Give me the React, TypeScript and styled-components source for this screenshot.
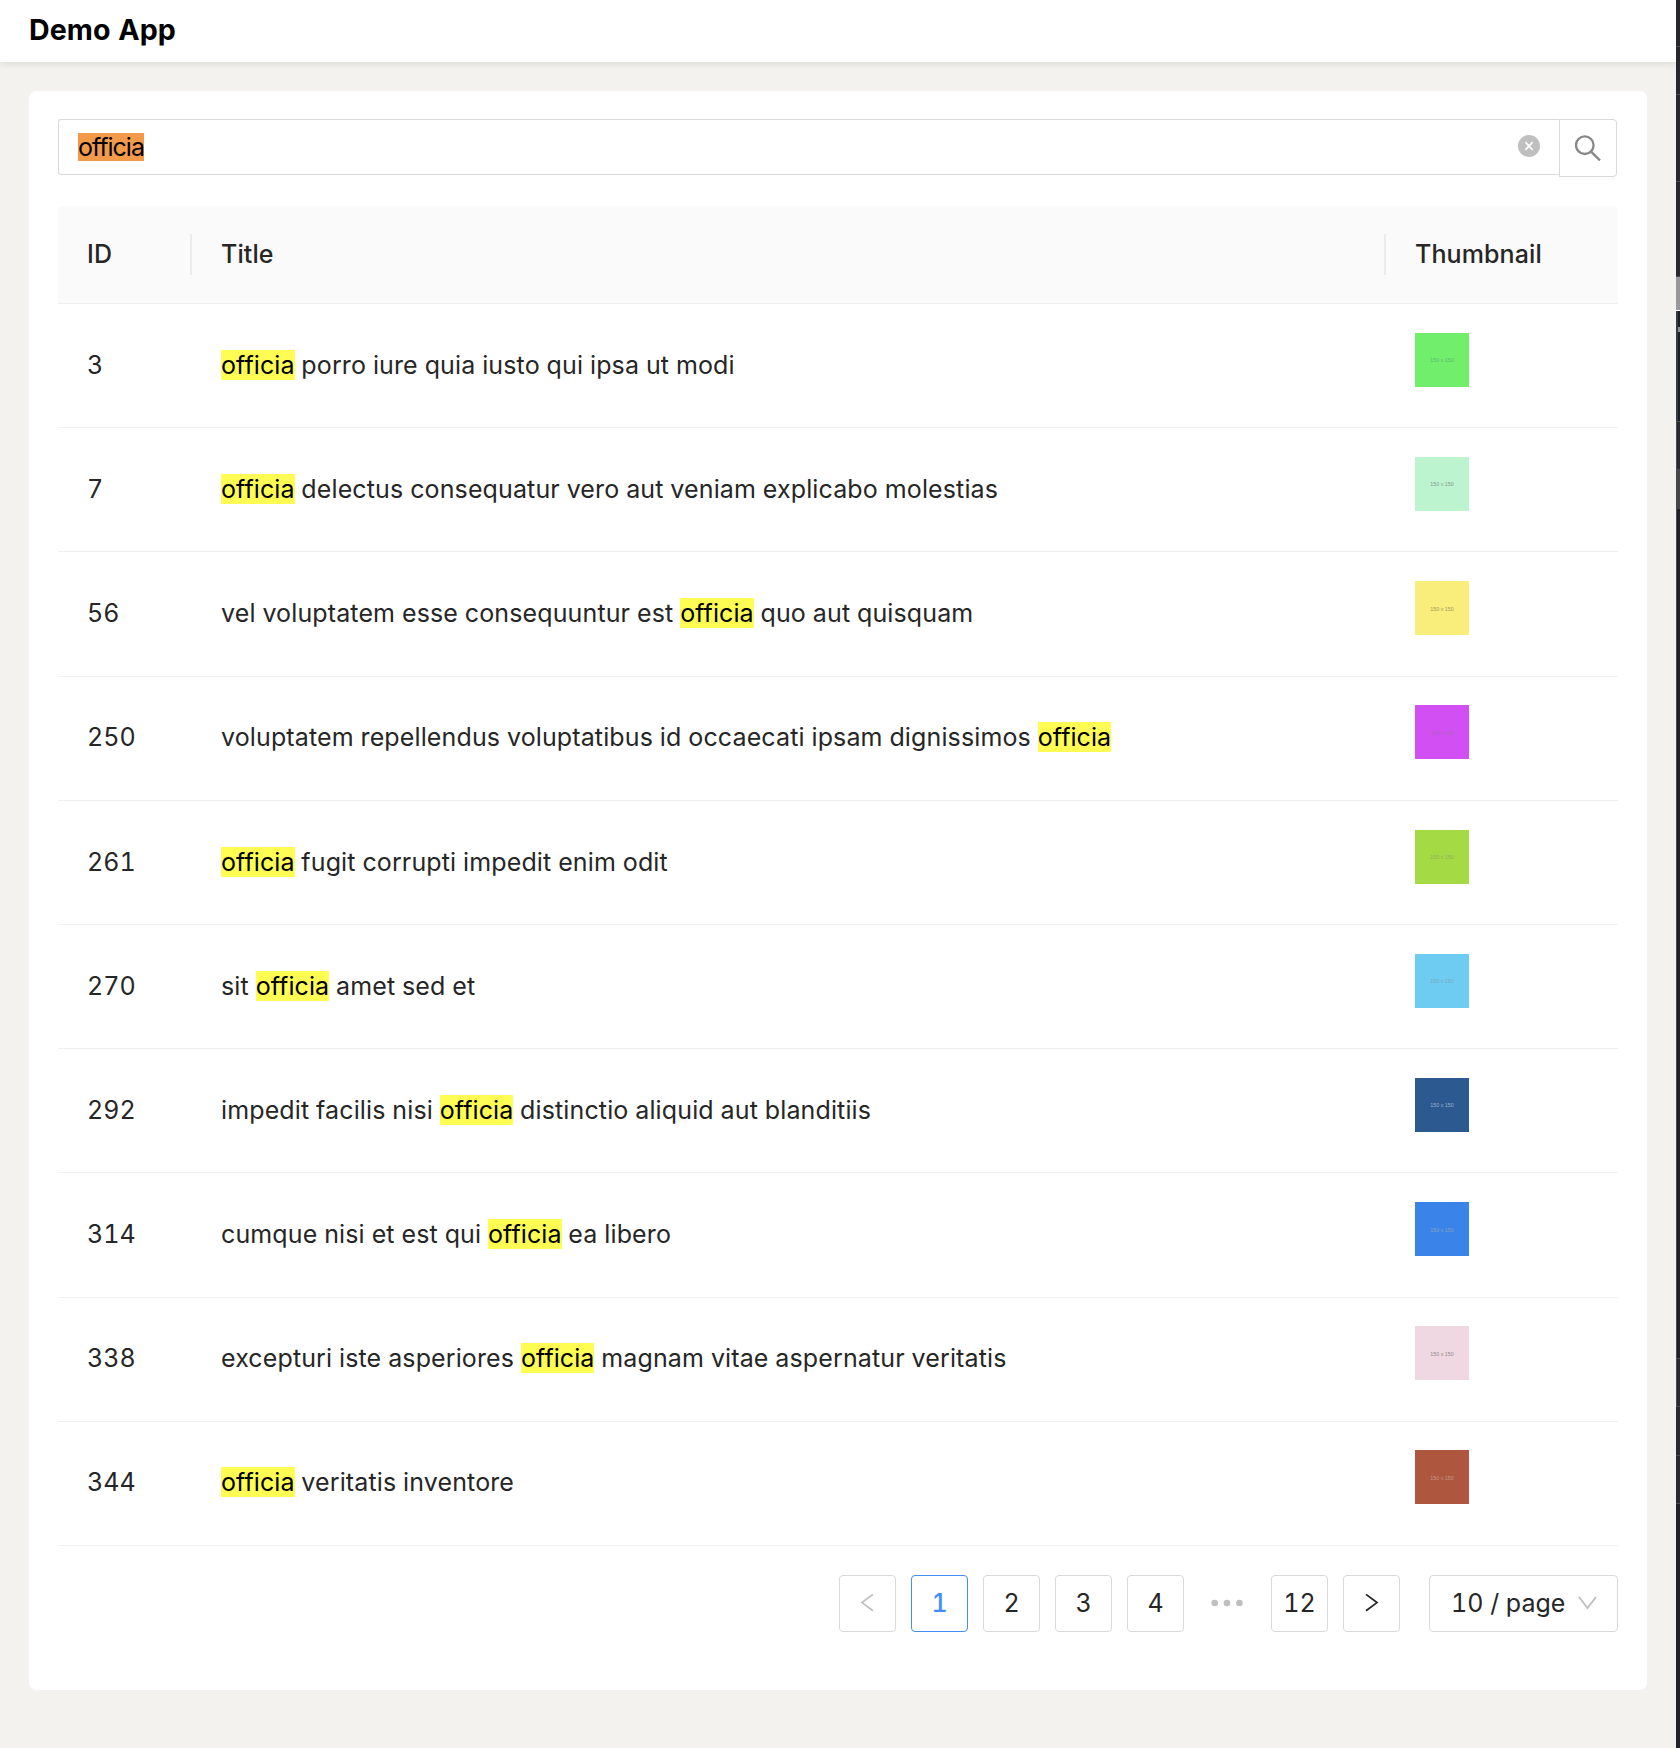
import React from 'react';
import styled, { createGlobalStyle } from 'styled-components';

const Global = createGlobalStyle`
  *, *::before, *::after { box-sizing: border-box; }
  body { margin: 0; background: #f3f2ee; }
`;

const Screen = styled.div`
  display: flex;
  width: 1680px;
  height: 1748px;
  overflow: hidden;
  font-family: Inter, "Liberation Sans", sans-serif;
  font-size: 25px;
  font-variant-numeric: tabular-nums;
  color: #262626;
`;
const Page = styled.div`
  flex: 1;
  background: #f3f2ee;
`;
const Header = styled.header`
  height: 62px;
  padding: 0 29px;
  display: flex;
  align-items: center;
  background: #fff;
  box-shadow: 0 2px 7px rgba(0, 20, 0, 0.1);
`;
const Brand = styled.h1`
  margin: 0 0 2px;
  font-size: 28.6px;
  line-height: 40px;
  font-weight: 700;
  letter-spacing: 0.05px;
  color: #000;
`;
const Card = styled.main`
  margin: 29px 29px 0;
  height: 1599px;
  padding: 28px 29px 0;
  border-radius: 7px;
  background: #fff;
`;
const SearchBar = styled.div`
  display: flex;
  align-items: flex-start;
  width: 1559px;
  height: 58px;
`;
const Field = styled.div`
  flex: 1;
  height: 56px;
  padding: 0 19px 0 19px;
  display: flex;
  align-items: center;
  justify-content: space-between;
  border: 1px solid #d9d9d9;
  border-right: 0;
  border-radius: 3px 0 0 3px;
  svg { margin-bottom: 2px; }
`;
const Selection = styled.span`
  height: 28px;
  line-height: 28px;
  letter-spacing: -1px;
  color: #000;
  background: #f39a4a;
`;
const SearchButton = styled.button`
  width: 58px;
  height: 58px;
  padding: 0;
  display: flex;
  align-items: center;
  justify-content: center;
  background: #fff;
  border: 1px solid #d9d9d9;
  border-radius: 0 4px 4px 0;
  box-shadow: 0 3px 0 rgba(0, 0, 0, 0.015);
`;
const Table = styled.div`
  margin-top: 29px;
  width: 1560px;
`;
const Row = styled.div`
  display: grid;
  grid-template-columns: 134px 1194px 1fr;
  height: 124.19px;
  border-bottom: 1px solid #f0f0f0;
`;
const HeadRow = styled(Row)`
  height: 98px;
  background: #fafafa;
  border-radius: 4px 4px 0 0;
  font-weight: 500;
  letter-spacing: 0.1px;
`;
const HeadCell = styled.div<{ $divided?: boolean }>`
  padding-left: 29px;
  display: flex;
  align-items: center;
  justify-content: space-between;
  &::after {
    content: '';
    width: ${(p) => (p.$divided ? 2 : 0)}px;
    height: 41px;
    background: #ebebeb;
  }
`;
const HeadLabel = styled.span`
  margin-bottom: 2px;
`;
const Cell = styled.div`
  padding: 40.77px 0 0 29px;
  line-height: 40px;
  white-space: pre;
`;
const TitleCell = styled(Cell)`
  letter-spacing: 0.125px;
`;
const ThumbCell = styled.div`
  padding: 28.77px 0 0 29px;
`;
const Mark = styled.mark`
  letter-spacing: 0.08px;
  color: #000;
  background: #fffd54;
`;
const Thumb = styled.div<{ $color: string; $ink: string }>`
  width: 54px;
  height: 54px;
  display: flex;
  align-items: center;
  justify-content: center;
  padding-top: 1px;
  font-family: "Liberation Sans", sans-serif;
  font-size: 5.3px;
  background: ${(p) => p.$color};
  color: ${(p) => p.$ink};
`;
const Pagination = styled.nav`
  margin-top: 29.1px;
  width: 1560px;
  display: flex;
  justify-content: flex-end;
  gap: 15px;
`;
const PageBox = styled.button<{ $active?: boolean; $plain?: boolean }>`
  width: 57px;
  height: 57px;
  padding: 0;
  display: flex;
  align-items: center;
  justify-content: center;
  font: inherit;
  font-variant-numeric: tabular-nums;
  font-weight: ${(p) => (p.$active ? 550 : 400)};
  color: ${(p) => (p.$active ? '#438ef7' : '#262626')};
  background: ${(p) => (p.$plain ? 'transparent' : '#fff')};
  border: 1px solid ${(p) => (p.$plain ? 'transparent' : p.$active ? '#438ef7' : '#d9d9d9')};
  border-radius: 4px;
`;
const SizeSelect = styled.button`
  width: 189px;
  height: 57px;
  margin-left: 14px;
  padding: 0 20px 0 21px;
  display: flex;
  align-items: center;
  justify-content: space-between;
  font: inherit;
  font-variant-numeric: tabular-nums;
  color: #262626;
  background: #fff;
  border: 1px solid #d9d9d9;
  border-radius: 4px;
`;
const Edge = styled.aside`
  width: 4px;
  display: flex;
  flex-direction: column;
`;
const EdgePart = styled.div<{ $h: number; $color: string; $line?: string; $side?: string }>`
  height: ${(p) => p.$h}px;
  background: ${(p) => p.$color};
  border-bottom: 1px solid ${(p) => p.$line || '#4a4b4e'};
  box-shadow: inset ${(p) => (p.$side ? `1px 0 0 ${p.$side}` : '0 0 0 transparent')};
`;
const EdgeTick = styled.div`
  width: 2px;
  height: 5px;
  margin: 16px 0 0 2px;
  background: #8c8d8f;
`;

const Prev = () => (
  <svg width="16" height="20" viewBox="0 0 16 20" fill="none" stroke="#bfbfbf" strokeWidth="1.7">
    <path d="M13 1.4 2 9.6 13 17.8" />
  </svg>
);
const Next = () => (
  <svg width="14" height="20" viewBox="0 0 14 20" fill="none" stroke="#262626" strokeWidth="1.8">
    <path d="M1 1.4 12 9.6 1 17.8" />
  </svg>
);
const Dots = () => (
  <svg width="34" height="8" viewBox="0 0 34 8" fill="#bfbfbf">
    <circle cx="3.7" cy="4" r="3.3" />
    <circle cx="16" cy="4" r="3.3" />
    <circle cx="28.4" cy="4" r="3.3" />
  </svg>
);
const Down = () => (
  <svg width="19" height="14" viewBox="0 0 19 14" fill="none" stroke="#bfbfbf" strokeWidth="1.9">
    <path d="M1 1 9.5 12 18 1" />
  </svg>
);
const Clear = () => (
  <svg width="22" height="22" viewBox="0 0 22 22">
    <circle cx="11" cy="11" r="11" fill="#bfbfbf" />
    <path d="M7.4 7.2 14.6 14.8M14.6 7.2 7.4 14.8" stroke="#fff" strokeWidth="1.7" />
  </svg>
);
const Magnifier = () => (
  <svg width="26" height="26" viewBox="0 0 26 26" fill="none" stroke="#878787" strokeWidth="2.3">
    <circle cx="9.8" cy="10.2" r="8.8" />
    <path d="M16 16.6 25 25.4" />
  </svg>
);

type Item = { id: number; title: string; color: string; ink: string };
const items: Item[] = [
  { id: 3, title: 'officia porro iure quia iusto qui ipsa ut modi', color: '#71ee6b', ink: '#5cb874' },
  { id: 7, title: 'officia delectus consequatur vero aut veniam explicabo molestias', color: '#bdf4d0', ink: '#7d9a88' },
  { id: 56, title: 'vel voluptatem esse consequuntur est officia quo aut quisquam', color: '#f9ed7b', ink: '#a0975c' },
  { id: 250, title: 'voluptatem repellendus voluptatibus id occaecati ipsam dignissimos officia', color: '#d24ff3', ink: '#a868b8' },
  { id: 261, title: 'officia fugit corrupti impedit enim odit', color: '#a4da43', ink: '#94ae60' },
  { id: 270, title: 'sit officia amet sed et', color: '#6ecbf2', ink: '#7ca8bc' },
  { id: 292, title: 'impedit facilis nisi officia distinctio aliquid aut blanditiis', color: '#2c5a90', ink: '#9cb0c8' },
  { id: 314, title: 'cumque nisi et est qui officia ea libero', color: '#3a83e9', ink: '#8aa2c4' },
  { id: 338, title: 'excepturi iste asperiores officia magnam vitae aspernatur veritatis', color: '#efd8e1', ink: '#94858c' },
  { id: 344, title: 'officia veritatis inventore', color: '#ae573e', ink: '#c09a88' },
];

const Highlighted = ({ text, term }: { text: string; term: string }) => (
  <>
    {text.split(new RegExp(`(${term})`)).map((part, i) =>
      part === term ? <Mark key={i}>{part}</Mark> : part
    )}
  </>
);

export default function App() {
  return (
    <Screen>
      <Global />
      <Page>
        <Header>
          <Brand>Demo App</Brand>
        </Header>
        <Card>
          <SearchBar>
            <Field>
              <Selection>officia</Selection>
              <Clear />
            </Field>
            <SearchButton aria-label="Search">
              <Magnifier />
            </SearchButton>
          </SearchBar>
          <Table>
            <HeadRow>
              <HeadCell $divided><HeadLabel>ID</HeadLabel></HeadCell>
              <HeadCell $divided><HeadLabel>Title</HeadLabel></HeadCell>
              <HeadCell><HeadLabel>Thumbnail</HeadLabel></HeadCell>
            </HeadRow>
            {items.map((item) => (
              <Row key={item.id}>
                <Cell>{item.id}</Cell>
                <TitleCell>
                  <Highlighted text={item.title} term="officia" />
                </TitleCell>
                <ThumbCell>
                  <Thumb $color={item.color} $ink={item.ink}>150 x 150</Thumb>
                </ThumbCell>
              </Row>
            ))}
          </Table>
          <Pagination>
            <PageBox aria-label="Previous"><Prev /></PageBox>
            <PageBox $active>1</PageBox>
            <PageBox>2</PageBox>
            <PageBox>3</PageBox>
            <PageBox>4</PageBox>
            <PageBox $plain aria-label="More"><Dots /></PageBox>
            <PageBox>12</PageBox>
            <PageBox aria-label="Next"><Next /></PageBox>
            <SizeSelect>
              10 / page
              <Down />
            </SizeSelect>
          </Pagination>
        </Card>
      </Page>
      <Edge>
        <EdgePart $h={47} $color="#27282b" />
        <EdgePart $h={48} $color="#27282b" />
        <EdgePart $h={87} $color="#27282b" />
        <EdgePart $h={95} $color="#27282b" />
        <EdgePart $h={34} $color="#98989a" $line="#fff" />
        <EdgePart $h={111} $color="linear-gradient(90deg, #2f3c50 50%, #1c1e20 50%)">
          <EdgeTick />
        </EdgePart>
        <EdgePart $h={48} $color="#292a2d" $side="#4a4b4e" />
        <EdgePart $h={39} $color="#454648" />
        <EdgePart $h={850} $color="#202124" $side="#4a4b4e" />
        <EdgePart $h={48} $color="#292a2d" $side="#4a4b4e" />
        <EdgePart $h={49} $color="#292a2d" />
        <EdgePart $h={48} $color="#292a2d" />
        <EdgePart $h={244} $color="#202124" $line="#202124" />
      </Edge>
    </Screen>
  );
}
